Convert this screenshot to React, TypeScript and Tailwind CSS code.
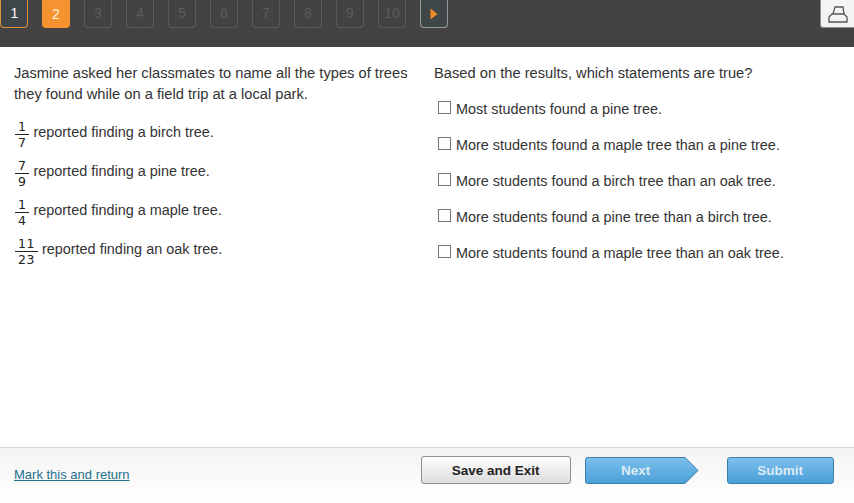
const pages = ['3', '4', '5', '6', '7', '8', '9', '10'];

const facts = [
  { num: '1', den: '7', text: 'reported finding a birch tree.' },
  { num: '7', den: '9', text: 'reported finding a pine tree.' },
  { num: '1', den: '4', text: 'reported finding a maple tree.' },
  { num: '11', den: '23', text: 'reported finding an oak tree.' },
];

const options = [
  'Most students found a pine tree.',
  'More students found a maple tree than a pine tree.',
  'More students found a birch tree than an oak tree.',
  'More students found a pine tree than a birch tree.',
  'More students found a maple tree than an oak tree.',
];

const Fraction = ({ num, den }: { num: string; den: string }) => (
  <span className="ml-px flex flex-col items-stretch text-center font-['DejaVu_Sans',sans-serif] text-[12.5px] leading-[14px] text-[#222] tracking-[0.5px]">
    <span className="border-b border-[#222] px-[3px]">{num}</span>
    <span className="px-[3px] pt-px">{den}</span>
  </span>
);

export default function App() {
  return (
    <div className="flex h-[503px] w-[854px] flex-col overflow-hidden bg-white font-['Liberation_Sans',Arial,sans-serif] text-[14.7px] text-[#333]">
      {/* top bar */}
      <div className="flex h-[47px] shrink-0 items-start justify-between bg-[#434343]">
        <div className="flex gap-[14px]">
          <div className="flex h-[28px] w-[28px] items-center justify-center rounded-b-[4px] border border-t-0 border-[#e08f3c] bg-[#3f4648] pl-px text-[14px] text-white">1</div>
          <div className="flex h-[28px] w-[28px] items-center justify-center rounded-b-[4px] bg-[#f6922f] text-[14px] text-[#fff3df]">2</div>
          {pages.map((p) => (
            <div key={p} className="flex h-[28px] w-[28px] items-center justify-center rounded-b-[4px] border border-t-0 border-[#5a5a5a] text-[14px] text-[#5c5c5c]">
              {p}
            </div>
          ))}
          <div className="flex h-[28px] w-[28px] items-center justify-center rounded-b-[4px] border border-t-0 border-[#9a9a9a] bg-[#3f4648]">
            <svg width="8" height="12" viewBox="0 0 8 12">
              <path d="M.5.5L7.5 6l-7 5.5z" fill="#f08a24" />
            </svg>
          </div>
        </div>
        <div className="flex h-[28px] w-[34px] items-center justify-center rounded-bl-[3px] border-b border-l border-[#8c8c8c] bg-[#f4f4f4]">
          <svg width="20" height="18" viewBox="0 0 20 18" fill="none" stroke="#555" strokeWidth="1.3">
            <path d="M1 17v-5l3-3h12l3 3v5z" />
            <path d="M5 9l2-7h8l1 7" />
          </svg>
        </div>
      </div>

      {/* question */}
      <div className="flex min-h-0 flex-1">
        <div className="w-[434px] shrink-0 pl-[14px] pt-[16px]">
          <p className="w-[410px] leading-[21px]">
            Jasmine asked her classmates to name all the types of trees they found while on a field trip at a local park.
          </p>
          <div className="mt-[14px] flex flex-col gap-[7px]">
            {facts.map((f) => (
              <div key={f.text} className="flex h-[32px] items-center gap-[4px] text-[14.43px]">
                <Fraction num={f.num} den={f.den} />
                <span className="pb-[5px]">{f.text}</span>
              </div>
            ))}
          </div>
        </div>
        <div className="flex-1 pt-[16px]">
          <p className="leading-[21px]">Based on the results, which statements are true?</p>
          <div className="mt-[8px] flex flex-col pl-[4px]">
            {options.map((o) => (
              <div key={o} className="flex h-[36px] items-center gap-[5px] text-[14.43px]">
                <span className="mb-[6px] h-[13px] w-[13px] shrink-0 border border-[#777] bg-white" />
                <span>{o}</span>
              </div>
            ))}
          </div>
        </div>
      </div>

      {/* footer */}
      <div className="flex h-[56px] shrink-0 items-start border-t border-[#d6d6d6] bg-gradient-to-b from-[#f4f4f4] to-white pl-[14px] pt-[8px]">
        <a className="mt-[11px] text-[13px] leading-[16px] text-[#24708f] underline">Mark this and return</a>
        <button className="ml-[291px] h-[28px] w-[150px] rounded-[3px] border border-[#8f8f8f] bg-gradient-to-b from-white to-[#dcdcdc] pt-[2px] text-[13.5px] font-bold text-[#222]">
          Save and Exit
        </button>
        <div className="relative ml-[14px] mt-px h-[27px] w-[114px]">
          <svg className="absolute inset-0" width="114" height="27" viewBox="0 0 114 27">
            <defs>
              <linearGradient id="nextFill" x1="0" y1="0" x2="0" y2="1">
                <stop offset="0" stopColor="#7cc0ec" />
                <stop offset="1" stopColor="#4a9fd8" />
              </linearGradient>
            </defs>
            <path d="M2.5.5H100l13 13-13 13H2.5a2 2 0 0 1-2-2v-22a2 2 0 0 1 2-2z" fill="url(#nextFill)" stroke="#3d7ea8" />
          </svg>
          <span className="absolute inset-0 flex items-center justify-center pr-[12px] pt-px text-[13.5px] font-bold text-[#dcebf5]">Next</span>
        </div>
        <button className="ml-[28px] mt-px h-[27px] w-[107px] rounded-[3px] border border-[#3d7ea8] bg-gradient-to-b from-[#7cc0ec] to-[#4a9fd8] pt-px text-[13.5px] font-bold text-[#dcebf5]">
          Submit
        </button>
      </div>
    </div>
  );
}
